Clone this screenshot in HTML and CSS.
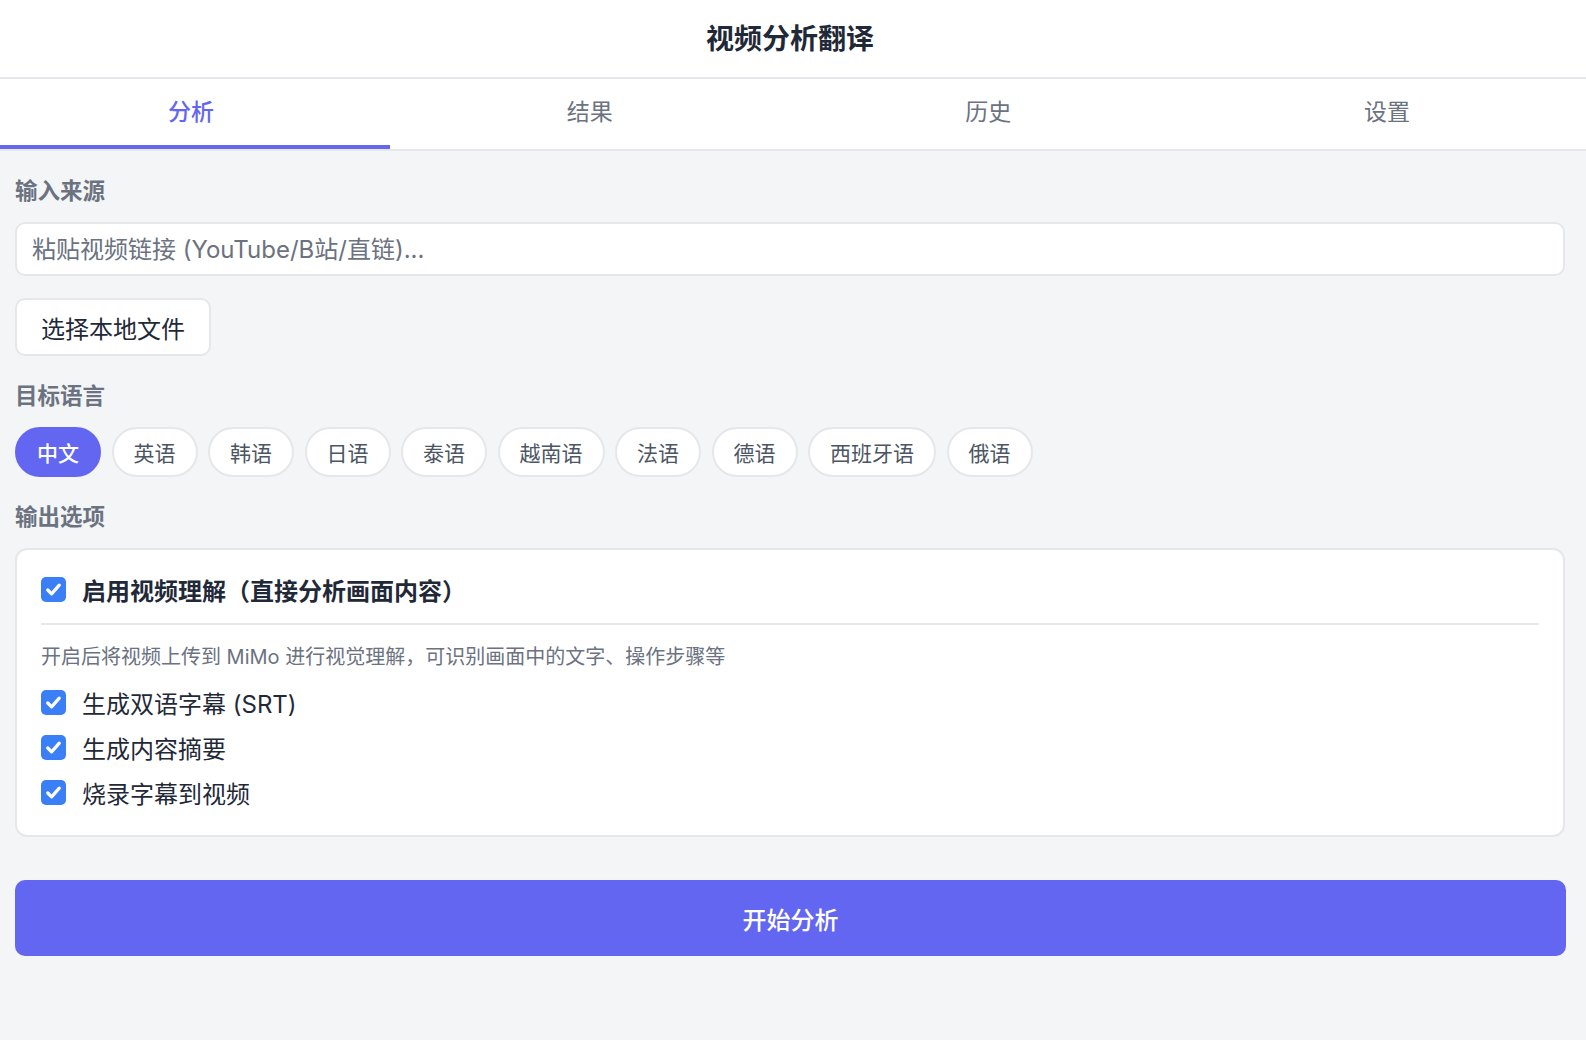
FILE: index.html
```html
<!DOCTYPE html>
<html lang="zh-CN">
<head>
  <meta charset="UTF-8">
  <meta name="viewport" content="width=device-width, initial-scale=1.0">
  <title>视频分析翻译</title>
  <link rel="stylesheet" href="styles.css">
</head>
<body>
  <header class="app-header">
    <h1>视频分析翻译</h1>
  </header>

  <nav class="tabs">
    <button class="tab active">分析</button>
    <button class="tab">结果</button>
    <button class="tab">历史</button>
    <button class="tab">设置</button>
  </nav>

  <main class="content">
    <div class="section-label">输入来源</div>
    <input class="url-input" type="text" placeholder="粘贴视频链接 (YouTube/B站/直链)...">
    <button class="file-btn">选择本地文件</button>

    <div class="section-label">目标语言</div>
    <div class="chips">
      <button class="chip active">中文</button>
      <button class="chip">英语</button>
      <button class="chip">韩语</button>
      <button class="chip">日语</button>
      <button class="chip">泰语</button>
      <button class="chip">越南语</button>
      <button class="chip">法语</button>
      <button class="chip">德语</button>
      <button class="chip">西班牙语</button>
      <button class="chip">俄语</button>
    </div>

    <div class="section-label">输出选项</div>
    <div class="options-card">
      <label class="option option-main">
        <span class="check"><svg viewBox="0 0 24 24"><path d="M6 12.5l4 4 8-9" /></svg></span>
        启用视频理解（直接分析画面内容）
      </label>
      <div class="divider"></div>
      <p class="hint">开启后将视频上传到 MiMo 进行视觉理解，可识别画面中的文字、操作步骤等</p>
      <div class="option-list">
        <label class="option">
          <span class="check"><svg viewBox="0 0 24 24"><path d="M6 12.5l4 4 8-9" /></svg></span>
          生成双语字幕 (SRT)
        </label>
        <label class="option">
          <span class="check"><svg viewBox="0 0 24 24"><path d="M6 12.5l4 4 8-9" /></svg></span>
          生成内容摘要
        </label>
        <label class="option">
          <span class="check"><svg viewBox="0 0 24 24"><path d="M6 12.5l4 4 8-9" /></svg></span>
          烧录字幕到视频
        </label>
      </div>
    </div>

    <button class="start-btn">开始分析</button>
  </main>
</body>
</html>
```

FILE: styles.css
```css
:root {
  --primary-color: #6366f1;
  --check-color: #3b7ff6;
  --text-color: #1f2937;
  --light-text: #6b7280;
  --chip-text: #4b5563;
  --background: #f4f5f7;
  --card-bg: #ffffff;
  --border-color: #e5e7eb;
  --border-radius: 10px;
}

* {
  box-sizing: border-box;
  margin: 0;
  padding: 0;
}

body {
  font-family: "Inter", "Noto Sans CJK SC", sans-serif;
  background: var(--background);
  color: var(--text-color);
  min-height: 100vh;
}

button {
  font-family: inherit;
  cursor: pointer;
}

.app-header {
  background: var(--card-bg);
  height: 79px;
  border-bottom: 2px solid var(--border-color);
  display: flex;
  align-items: center;
  justify-content: center;
  padding-right: 6px;
}

.app-header h1 {
  font-size: 28px;
  font-weight: 700;
  line-height: 36px;
  color: var(--text-color);
}

.tabs {
  background: var(--card-bg);
  height: 72px;
  border-bottom: 2px solid var(--border-color);
  display: flex;
  justify-content: space-between;
}

.tab {
  flex: 1;
  max-width: 390px;
  background: none;
  border: none;
  border-bottom: 4px solid transparent;
  font-size: 23px;
  line-height: 32px;
  color: var(--light-text);
  padding: 0 8px 0 0;
}

.tab.active {
  color: var(--primary-color);
  font-weight: 500;
  border-bottom-color: var(--primary-color);
}

.content {
  padding: 24px 21px 40px 15px;
  display: flex;
  flex-direction: column;
  align-items: flex-start;
}

.section-label {
  font-size: 22.5px;
  font-weight: 700;
  line-height: 32px;
  color: var(--light-text);
  margin-bottom: 15px;
}

.url-input {
  width: 100%;
  height: 54px;
  padding: 0 15px;
  border: 2px solid var(--border-color);
  border-radius: var(--border-radius);
  background: var(--card-bg);
  font-family: inherit;
  font-size: 24px;
  color: var(--text-color);
  margin-bottom: 22px;
}

.url-input::placeholder {
  color: var(--light-text);
}

.file-btn {
  height: 58px;
  padding: 0 24px;
  background: var(--card-bg);
  border: 2px solid var(--border-color);
  border-radius: var(--border-radius);
  font-size: 24px;
  color: var(--text-color);
  margin-bottom: 24px;
}

.chips {
  display: flex;
  flex-wrap: wrap;
  gap: 10.5px;
  margin-bottom: 24px;
}

.chip {
  height: 50px;
  padding: 0 20px;
  border: 2px solid var(--border-color);
  border-radius: 25px;
  background: var(--card-bg);
  font-size: 21px;
  color: var(--chip-text);
}

.chip.active {
  background: var(--primary-color);
  border-color: var(--primary-color);
  color: white;
  font-weight: 500;
}

.options-card {
  width: 100%;
  background: var(--card-bg);
  border: 2px solid var(--border-color);
  border-radius: 12px;
  padding: 23px 24px 27px;
}

.option {
  display: flex;
  align-items: center;
  gap: 16px;
  height: 32px;
  font-size: 24px;
  color: var(--text-color);
  cursor: pointer;
}

.option-main {
  font-weight: 700;
}

.check {
  width: 25px;
  height: 25px;
  flex-shrink: 0;
  border-radius: 5px;
  background: var(--check-color);
  display: flex;
  align-items: center;
  justify-content: center;
}

.check svg {
  width: 23px;
  height: 23px;
  fill: none;
  stroke: white;
  stroke-width: 3.4;
  stroke-linecap: round;
  stroke-linejoin: round;
}

.divider {
  height: 2px;
  background: var(--border-color);
  margin: 18px 0 18px;
}

.hint {
  font-size: 20px;
  line-height: 28px;
  color: var(--light-text);
  margin-bottom: 15px;
}

.option-list {
  display: flex;
  flex-direction: column;
  gap: 13px;
}

.start-btn {
  width: calc(100% + 1px);
  height: 76px;
  margin-top: 43px;
  border: none;
  border-radius: var(--border-radius);
  background: var(--primary-color);
  color: white;
  font-size: 24px;
  font-weight: 500;
}
```
